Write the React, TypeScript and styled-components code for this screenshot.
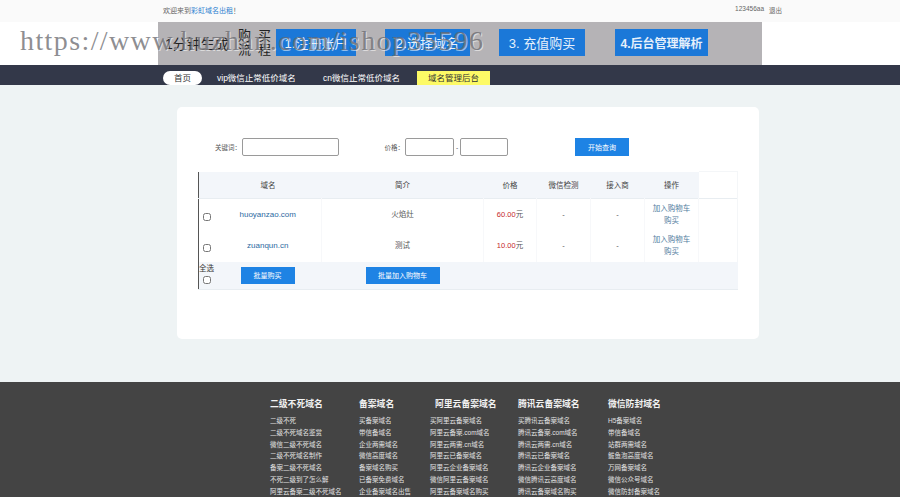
import React from "react";
import styled, { createGlobalStyle } from "styled-components";

const GlobalStyle = createGlobalStyle`
  html, body {
    margin: 0;
    padding: 0;
    background: #eef3f4;
    font-family: "Liberation Sans", "Noto Sans CJK SC", sans-serif;
    color: #333;
  }
  * { box-sizing: border-box; }
`;

const Page = styled.div`
  position: relative;
  width: 900px;
  height: 497px;
  overflow: hidden;
`;

const Watermark = styled.div`
  position: absolute;
  left: 20px;
  top: 25px;
  font-family: "Liberation Serif", serif;
  font-size: 28px;
  letter-spacing: 1.4px;
  white-space: nowrap;
  color: rgba(105, 105, 110, 0.75);
  text-shadow: 1px 1px 0 rgba(255, 255, 255, 0.55);
  pointer-events: none;
`;

const TopBar = styled.div`
  height: 22px;
  background: #fafafa;
  display: flex;
  align-items: center;
  justify-content: space-between;
  padding: 0 118px 2px 163px;
  font-size: 7px;
  color: #666;
`;

const BlueText = styled.span`
  color: #2a7fd0;
`;

const UserBox = styled.div`
  display: flex;
  gap: 5px;
  font-size: 6.5px;
`;

const Header = styled.div`
  height: 43px;
  padding-left: 158px;
  background: #fff;
`;

const HeaderPanel = styled.div`
  width: 604px;
  height: 43px;
  background: #b5b3b6;
  display: flex;
  align-items: center;
  padding: 0 0 2px 7px;
`;

const Slogan = styled.div`
  width: 73px;
  font-size: 14px;
  color: #222;
  white-space: nowrap;
`;

const FlowTitle = styled.div`
  width: 41px;
  margin-right: -3px;
  font-size: 13px;
  line-height: 14px;
  letter-spacing: 7px;
  color: #222;
`;

const StepButton = styled.div<{ $w: number; $gap: number }>`
  width: ${(p) => p.$w}px;
  margin-right: ${(p) => p.$gap}px;
  height: 27px;
  background: #1b78d8;
  color: #e6f0fb;
  font-size: 13px;
  display: flex;
  align-items: center;
  justify-content: center;
  white-space: nowrap;
`;

const StrongStep = styled.b`
  font-size: 12px;
`;

const Nav = styled.div`
  height: 20px;
  background: #333849;
  display: flex;
  align-items: flex-end;
  padding-left: 163px;
  font-size: 8.5px;
  color: #fff;
`;

const NavHome = styled.div`
  width: 39px;
  height: 14px;
  background: #fff;
  color: #333;
  border-radius: 7px;
  text-align: center;
  line-height: 14px;
  margin-right: 15px;
`;

const NavLink = styled.div<{ $w: number }>`
  width: ${(p) => p.$w}px;
  height: 14px;
  line-height: 14px;
  white-space: nowrap;
`;

const NavActive = styled.div`
  width: 73px;
  height: 14px;
  line-height: 14px;
  background: #fdfa66;
  color: #333;
  text-align: center;
`;

const Main = styled.div`
  height: 297px;
  padding: 22px 0 0 177px;
`;

const Card = styled.div`
  width: 582px;
  height: 232px;
  background: #fff;
  border-radius: 5px;
  padding: 31px 0 0 21px;
`;

const SearchRow = styled.div`
  display: flex;
  align-items: center;
  height: 18px;
  font-size: 6.5px;
  color: #555;
`;

const SearchLabel = styled.span<{ $w: number }>`
  width: ${(p) => p.$w}px;
  text-align: right;
  padding-right: 1px;
  white-space: nowrap;
`;

const SearchInput = styled.input<{ $w: number }>`
  width: ${(p) => p.$w}px;
  height: 18px;
  border: 1px solid #9a9a9a;
  border-radius: 2px;
  background: #fff;
  padding: 0;
`;

const Dash = styled.span`
  width: 6px;
  text-align: center;
`;

const QueryButton = styled.div`
  width: 54px;
  height: 18px;
  margin-left: 67px;
  background: #1e83e4;
  color: #fff;
  font-size: 7px;
  display: flex;
  align-items: center;
  justify-content: center;
`;

const Table = styled.table`
  margin-top: 15px;
  width: 540px;
  table-layout: fixed;
  border-collapse: collapse;
  border-left: 1px solid #555;
  font-size: 7.5px;
  color: #555;
`;

const HeadRow = styled.tr`
  height: 27px;
  border-bottom: 1px solid #e8edf1;
`;

const HeadCell = styled.th`
  background: #f3f6fa;
  font-weight: normal;
  text-align: center;
  padding: 0;
  color: #444;
`;

const BlankHead = styled.th`
  border-top: 1px solid #f4f6f8;
  border-right: 1px solid #f4f6f8;
  padding: 0;
`;

const BodyRow = styled.tr`
  height: 31.5px;
`;

const Cell = styled.td`
  text-align: center;
  padding: 0;
  border-right: 1px solid #f7f8fa;
  line-height: 12px;
`;

const PlainCell = styled.td`
  padding: 0;
  border-right: 1px solid #f4f6f8;
`;

const Check = styled.input`
  width: 8px;
  height: 8px;
  margin: 0;
  display: block;
`;

const CheckCell = styled(Cell)`
  padding: 4px 0 0 4px;
  border-right: 0;
`;

const DomainLink = styled.span`
  color: #2d6a9f;
  font-size: 8px;
`;

const Price = styled.span`
  color: #c5282c;
`;

const ActionLink = styled.div`
  color: #56809f;
`;

const BatchRow = styled.tr`
  height: 28px;
  background: #f3f6fa;
  border-bottom: 1px solid #e8edf1;
`;

const SelectAll = styled.div`
  font-size: 7.5px;
  line-height: 9px;
  color: #333;
  padding: 0 0 3px 0;
  white-space: nowrap;
  width: 16px;
`;

const AllCell = styled.td`
  padding: 0;
  vertical-align: top;
  padding-top: 2px;
`;

const BatchCell = styled.td`
  padding: 0;
`;

const BatchInner = styled.div`
  display: flex;
  padding-left: 26px;
`;

const BatchButton = styled.div<{ $w: number; $gap?: number }>`
  width: ${(p) => p.$w}px;
  margin-right: ${(p) => p.$gap || 0}px;
  height: 17px;
  background: #1e83e4;
  color: #fff;
  font-size: 7px;
  display: flex;
  align-items: center;
  justify-content: center;
`;

const FooterWrap = styled.div`
  height: 115px;
  background: #444;
  overflow: hidden;
  padding: 17px 0 0 270px;
  display: flex;
`;

const FooterCol = styled.div<{ $w: number }>`
  width: ${(p) => p.$w}px;
  flex: none;
`;

const FooterTitle = styled.div<{ $indent?: number }>`
  font-size: 8.8px;
  font-weight: 700;
  color: #f2f2f2;
  line-height: 11px;
  margin: 0 0 5px ${(p) => p.$indent || 0}px;
  white-space: nowrap;
`;

const FooterItem = styled.div`
  font-size: 6.5px;
  line-height: 11.8px;
  color: #e2e2e2;
  white-space: nowrap;
`;

const footerCols = [
  { w: 89, title: "二级不死域名", items: ["二级不死", "二级不死域名鉴赏", "微信二级不死域名", "二级不死域名制作", "备案二级不死域名", "不死二级到了怎么解", "阿里云备案二级不死域名"] },
  { w: 71, title: "备案域名", items: ["买备案域名", "带信备域名", "企业两需域名", "微信高度域名", "备案域名购买", "已备案免费域名", "企业备案域名出售"] },
  { w: 88, indent: 5, title: "阿里云备案域名", items: ["买阿里云备案域名", "阿里云备案.com域名", "阿里云两需.cn域名", "阿里云已备案域名", "阿里云企业备案域名", "微信阿里云备案域名", "阿里云备案域名购买"] },
  { w: 90, title: "腾讯云备案域名", items: ["买腾讯云备案域名", "腾讯云备案.com域名", "腾讯云两需.cn域名", "腾讯云已备案域名", "腾讯云企业备案域名", "微信腾讯云高度域名", "腾讯云备案域名购买"] },
  { w: 90, title: "微信防封域名", items: ["H5备案域名", "带信备域名", "站群两需域名", "鲅鱼泡高度域名", "万网备案域名", "微信公众号域名", "微信防封备案域名"] },
];

const rows = [
  { domain: "huoyanzao.com", intro: "火焰灶", price: "60.00" },
  { domain: "zuanqun.cn", intro: "测试", price: "10.00" },
];

export default function App() {
  return (
    <Page>
      <GlobalStyle />
      <TopBar>
        <div>欢迎来到<BlueText>彩虹域名出租</BlueText>！</div>
        <UserBox>
          <span>123456aa</span>
          <span>退出</span>
        </UserBox>
      </TopBar>
      <Header>
        <HeaderPanel>
          <Slogan>1分钟生成</Slogan>
          <FlowTitle>购买流程</FlowTitle>
          <StepButton $w={80} $gap={29}>1.注册账户</StepButton>
          <StepButton $w={85} $gap={29}>2.选择域名</StepButton>
          <StepButton $w={86} $gap={30}>3. 充值购买</StepButton>
          <StepButton $w={93} $gap={0}><StrongStep>4.后台管理解析</StrongStep></StepButton>
        </HeaderPanel>
      </Header>
      <Nav>
        <NavHome>首页</NavHome>
        <NavLink $w={106}>vip微信止常低价域名</NavLink>
        <NavLink $w={94}>cn微信止常低价域名</NavLink>
        <NavActive>域名管理后台</NavActive>
      </Nav>
      <Main>
        <Card>
          <SearchRow>
            <SearchLabel $w={44}>关键词：</SearchLabel>
            <SearchInput $w={97} />
            <SearchLabel $w={66}>价格：</SearchLabel>
            <SearchInput $w={49} />
            <Dash>-</Dash>
            <SearchInput $w={48} />
            <QueryButton>开始查询</QueryButton>
          </SearchRow>
          <Table>
            <colgroup>
              <col style={{ width: 16 }} />
              <col style={{ width: 107 }} />
              <col style={{ width: 162 }} />
              <col style={{ width: 53 }} />
              <col style={{ width: 54 }} />
              <col style={{ width: 54 }} />
              <col style={{ width: 54 }} />
              <col />
            </colgroup>
            <thead>
              <HeadRow>
                <HeadCell />
                <HeadCell>域名</HeadCell>
                <HeadCell>简介</HeadCell>
                <HeadCell>价格</HeadCell>
                <HeadCell>微信检测</HeadCell>
                <HeadCell>接入商</HeadCell>
                <HeadCell>操作</HeadCell>
                <BlankHead />
              </HeadRow>
            </thead>
            <tbody>
              {rows.map((r) => (
                <BodyRow key={r.domain}>
                  <CheckCell><Check type="checkbox" /></CheckCell>
                  <Cell><DomainLink>{r.domain}</DomainLink></Cell>
                  <Cell>{r.intro}</Cell>
                  <Cell><Price>{r.price}</Price>元</Cell>
                  <Cell>-</Cell>
                  <Cell>-</Cell>
                  <Cell>
                    <ActionLink>加入购物车</ActionLink>
                    <ActionLink>购买</ActionLink>
                  </Cell>
                  <PlainCell />
                </BodyRow>
              ))}
              <BatchRow>
                <AllCell>
                  <SelectAll>全选</SelectAll>
                  <Check type="checkbox" style={{ marginLeft: 4 }} />
                </AllCell>
                <BatchCell colSpan={7}>
                  <BatchInner>
                    <BatchButton $w={54} $gap={71}>批量购买</BatchButton>
                    <BatchButton $w={74}>批量加入购物车</BatchButton>
                  </BatchInner>
                </BatchCell>
              </BatchRow>
            </tbody>
          </Table>
        </Card>
      </Main>
      <FooterWrap>
        {footerCols.map((c) => (
          <FooterCol key={c.title} $w={c.w}>
            <FooterTitle $indent={c.indent}>{c.title}</FooterTitle>
            {c.items.map((i) => (
              <FooterItem key={i}>{i}</FooterItem>
            ))}
          </FooterCol>
        ))}
      </FooterWrap>
      <Watermark>https://www.huzhan.com/ishop35596</Watermark>
    </Page>
  );
}
